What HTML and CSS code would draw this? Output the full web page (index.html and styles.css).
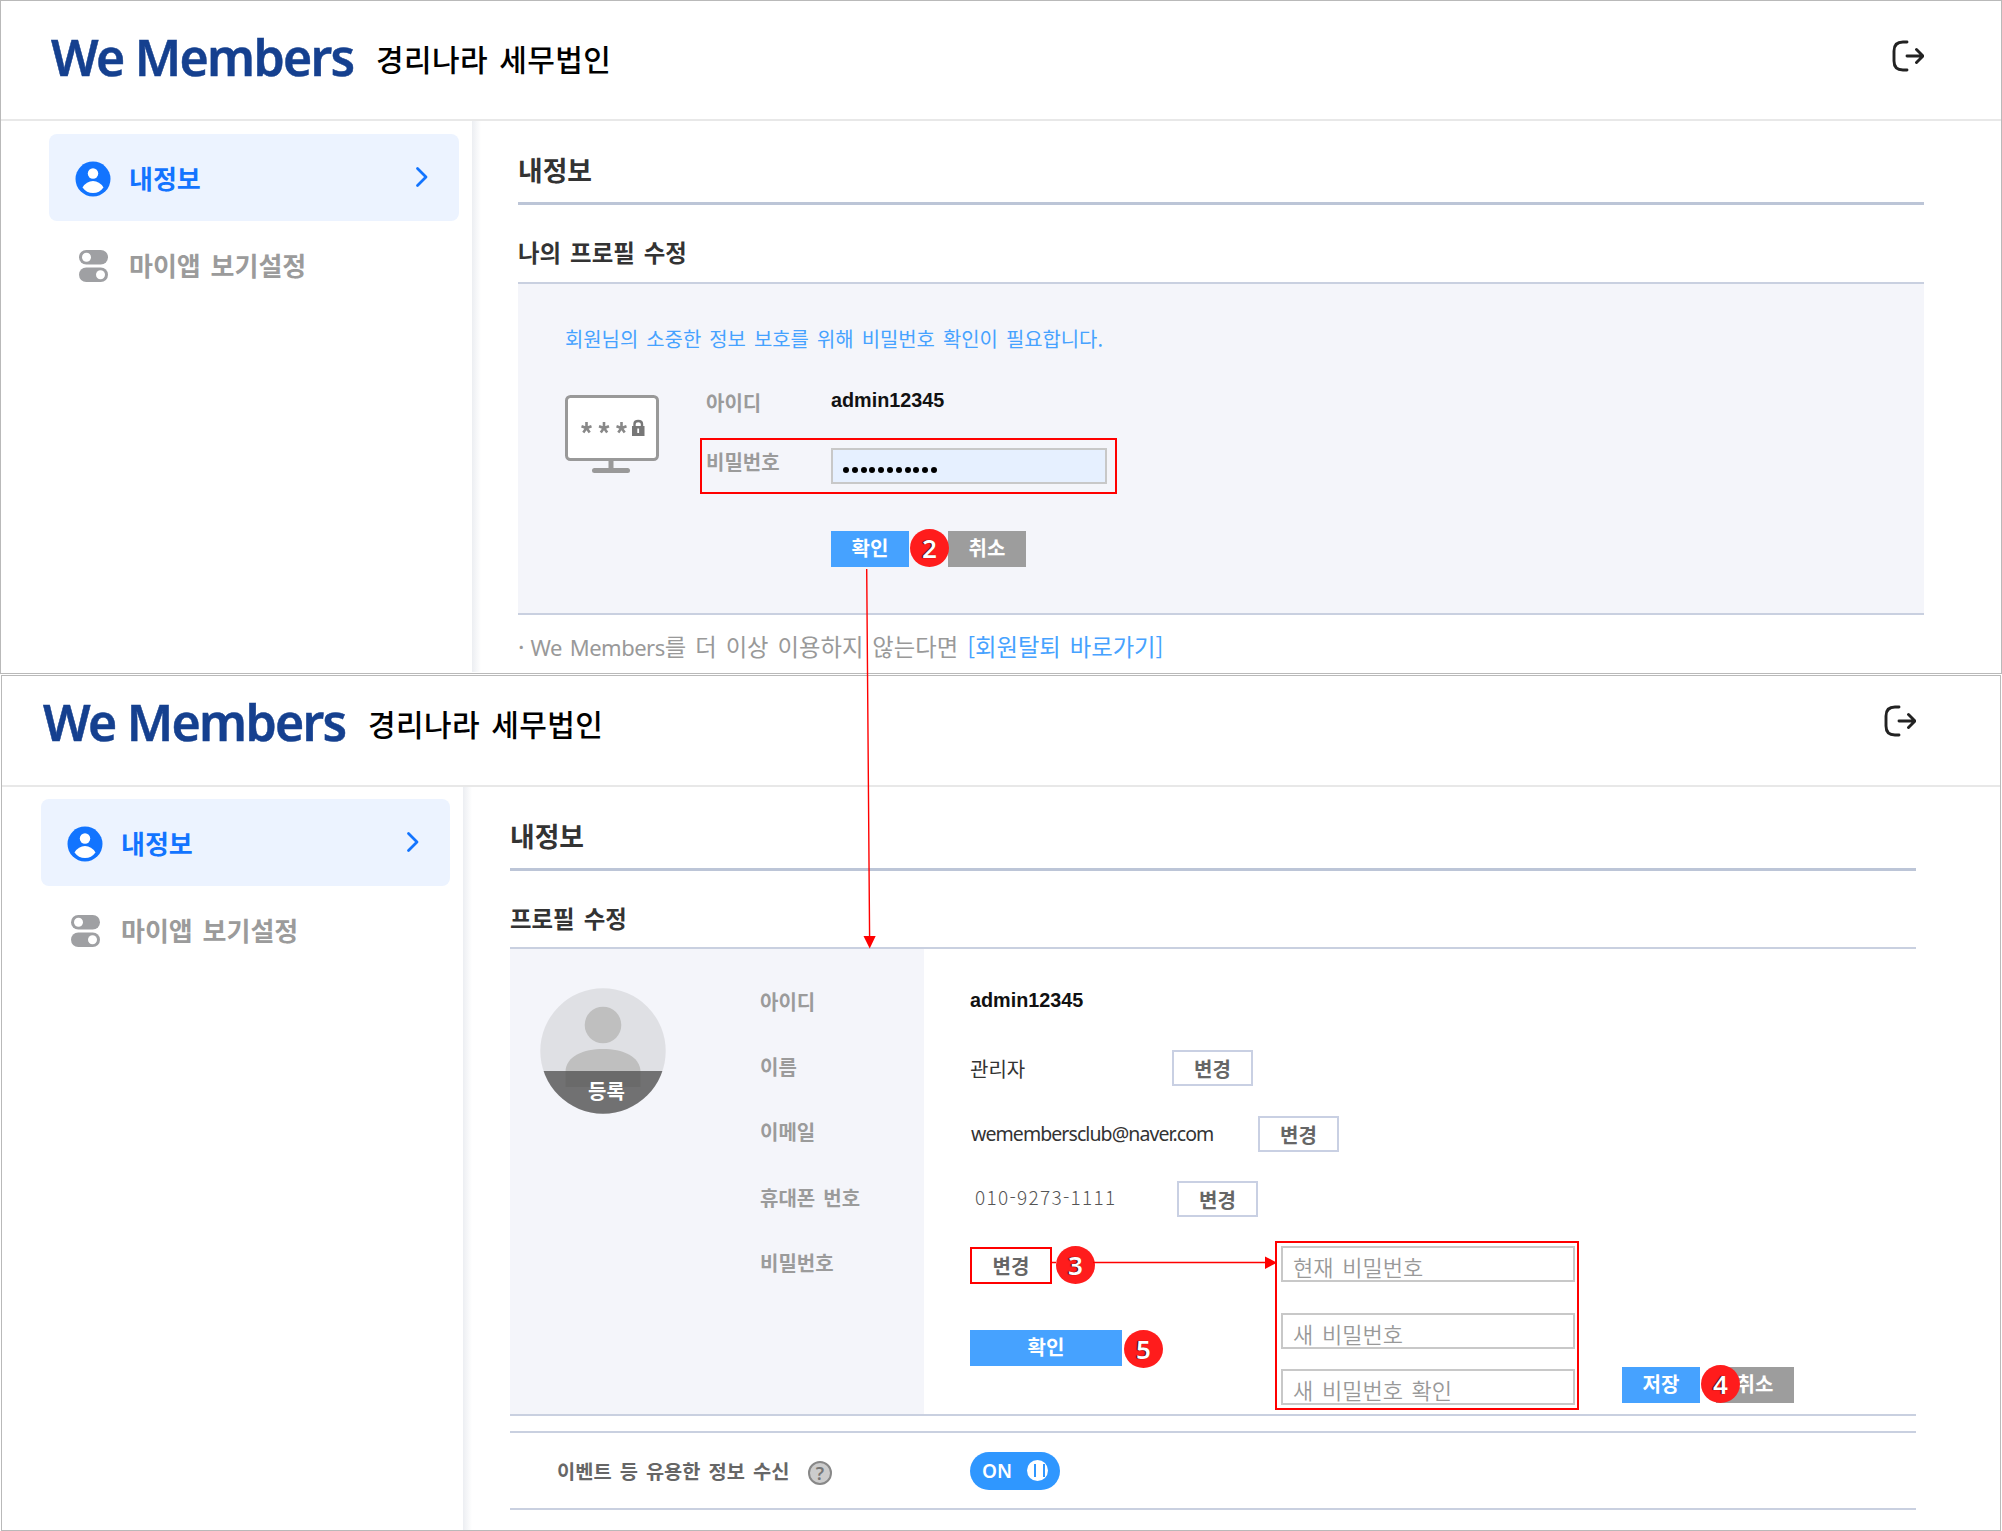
FILE: index.html
```html
<!DOCTYPE html>
<html lang="ko">
<head>
<meta charset="utf-8">
<title>We Members - 내정보</title>
<link rel="stylesheet" href="styles.css">
</head>

<body>
	<svg class="defs" width="0" height="0">
		<symbol id="logout" viewBox="0 0 32 32">
			<path d="M15 2H11Q2 2 2 11V21Q2 30 11 30H15M15 16H30M24.500 9.500L31 16L24.500 22.500" fill="none" stroke="#222" stroke-width="2.900" stroke-linecap="round" stroke-linejoin="round"/>
		</symbol>
		<symbol id="user" viewBox="0 0 36 36">
			<circle cx="18" cy="18" r="17.500" fill="#1274ff"/>
			<circle cx="18" cy="12.500" r="5.200" fill="#fff"/>
			<path d="M7.500 26.500Q11.500 20 18 20T28.500 26.500Q24.500 32 18 32T7.500 26.500Z" fill="#fff"/>
		</symbol>
		<symbol id="toggles" viewBox="0 0 29 32">
			<rect x="0" y="0" width="29" height="14.500" rx="7.250" fill="#9fa0a3"/>
			<rect x="0" y="17.500" width="29" height="14.500" rx="7.250" fill="#9fa0a3"/>
			<circle cx="7.500" cy="7.250" r="4.500" fill="#fff"/>
			<circle cx="21.500" cy="24.750" r="4.500" fill="#fff"/>
		</symbol>
		<symbol id="arrow" viewBox="0 0 14 22">
			<path d="M2.500 2.500L11 11L2.500 19.500" fill="none" stroke="#1274ff" stroke-width="2.800" stroke-linecap="round" stroke-linejoin="round"/>
		</symbol>
	</svg>

	<!-- 비밀번호 확인 -->
	<div class="screen check">
		<div class="header">
			<h1 class="logo">We Members</h1>
			<span class="company">경리나라 세무법인</span>
			<svg class="logout"><use href="#logout"/></svg>
		</div>
		<div class="body">
			<div class="sidebar">
				<a class="menu on"><svg class="icon"><use href="#user"/></svg><span>내정보</span><svg class="chevron"><use href="#arrow"/></svg></a>
				<a class="menu"><svg class="icon toggles"><use href="#toggles"/></svg><span>마이앱 보기설정</span></a>
			</div>
			<div class="main">
				<h2>내정보</h2>
				<h3>나의 프로필 수정</h3>
				<div class="confirmbox">
					<p class="guide">회원님의 소중한 정보 보호를 위해 비밀번호 확인이 필요합니다.</p>
					<div class="form">
						<svg class="monitor" width="94" height="79" viewBox="0 0 94 79">
							<rect x="1.500" y="1.500" width="91" height="63" rx="4" fill="#fff" stroke="#999" stroke-width="3"/>
							<path d="M46 66V74" stroke="#999" stroke-width="5"/>
							<path d="M29.500 75.500H62.500" stroke="#999" stroke-width="5" stroke-linecap="round"/>
							<g stroke="#888" stroke-width="2.600">
								<path id="star" d="M21.500 27V33M16.500 31.200L21.500 33L26.500 31.200M18.300 37.500L21.500 33L24.700 37.500" fill="none"/>
								<use href="#star" x="17.500"/>
								<use href="#star" x="35"/>
							</g>
							<rect x="67" y="31" width="12.500" height="10" fill="#777"/>
							<path d="M69.500 32V29Q69.500 26 73.200 26T77 29V32" fill="none" stroke="#777" stroke-width="2.400"/>
							<path d="M73.200 33.500V38" stroke="#fff" stroke-width="1.800"/>
						</svg>
						<div class="fields">
							<div class="row"><label>아이디</label><b class="userid">admin12345</b></div>
							<div class="row marked"><label>비밀번호</label><div class="password"><i></i><i></i><i></i><i></i><i></i><i></i><i></i><i></i><i></i><i></i><i></i></div></div>
							<div class="buttons">
								<a class="btn blue">확인</a>
								<a class="btn gray">취소</a>
								<span class="badge">2</span>
							</div>
						</div>
					</div>
				</div>
				<p class="leave"><span class="dot">·</span> <span class="brand">We Members</span>를 더 이상 이용하지 않는다면 <a>[회원탈퇴 바로가기]</a></p>
			</div>
		</div>
	</div>

	<!-- 프로필 수정 -->
	<div class="screen edit">
		<div class="header">
			<h1 class="logo">We Members</h1>
			<span class="company">경리나라 세무법인</span>
			<svg class="logout"><use href="#logout"/></svg>
		</div>
		<div class="body">
			<div class="sidebar">
				<a class="menu on"><svg class="icon"><use href="#user"/></svg><span>내정보</span><svg class="chevron"><use href="#arrow"/></svg></a>
				<a class="menu"><svg class="icon toggles"><use href="#toggles"/></svg><span>마이앱 보기설정</span></a>
			</div>
			<div class="main">
				<h2>내정보</h2>
				<h3>프로필 수정</h3>
				<div class="profile">
					<div class="left">
						<div class="avatar">
							<svg width="126" height="126" viewBox="0 0 126 126">
								<clipPath id="round"><circle cx="63" cy="63" r="62.700"/></clipPath>
								<g clip-path="url(#round)">
									<rect width="126" height="126" fill="#dfe0e4"/>
									<circle cx="63" cy="37" r="18.300" fill="#bfbfbf"/>
									<path d="M25.500 99V84C25.500 68 44 61 63 61S100.500 68 100.500 84V99Z" fill="#bfbfbf"/>
									<rect y="83" width="126" height="43" fill="#555" fill-opacity=".8"/>
								</g>
							</svg>
							<span>등록</span>
						</div>
						<ul class="labels">
							<li>아이디</li>
							<li>이름</li>
							<li>이메일</li>
							<li>휴대폰 번호</li>
							<li>비밀번호</li>
						</ul>
					</div>
					<div class="right">
						<div class="value"><b class="userid">admin12345</b></div>
						<div class="value"><span class="name">관리자</span><a class="btn line">변경</a></div>
						<div class="value"><span class="email">wemembersclub@naver.com</span><a class="btn line">변경</a></div>
						<div class="value"><span class="phone">010-9273-1111</span><a class="btn line">변경</a></div>
						<div class="change">
							<div class="actions">
								<a class="btn line red">변경</a>
								<a class="btn blue wide">확인</a>
								<span class="badge three">3</span>
								<span class="badge five">5</span>
							</div>
							<div class="newpassword">
								<div class="input">현재 비밀번호</div>
								<div class="input">새 비밀번호</div>
								<div class="input">새 비밀번호 확인</div>
							</div>
							<div class="save">
								<a class="btn blue">저장</a>
								<a class="btn gray">취소</a>
								<span class="badge">4</span>
							</div>
						</div>
					</div>
				</div>
				<div class="notice">
					<span class="text">이벤트 등 유용한 정보 수신</span>
					<span class="help">?</span>
					<span class="switch">ON<i></i></span>
				</div>
			</div>
		</div>
	</div>

	<svg class="flow" width="2002" height="1531" viewBox="0 0 2002 1531">
		<path d="M866.700 569L869.600 938M1052 1262.500H1056M1093 1262.500H1266" stroke="#f00" stroke-width="1.400"/>
		<path d="M863.500 936H875.700L869.700 948.500ZM1265 1256.500V1269L1277 1262.700Z" fill="#f00"/>
	</svg>
</body>
</html>
```
FILE: styles.css
```css
* {
	box-sizing: border-box;
}

body {
	position: relative;
	width: 2002px;
	height: 1531px;
	margin: 0;
	overflow: hidden;
	background: #fff;
	color: #333;
	font-size: 20px;
	font-family: "Noto Sans CJK KR", sans-serif;
	word-spacing: .126em;
}

h1, h2, h3, p, ul {
	margin: 0;
	padding: 0;
}

li {
	list-style: none;
}

.defs {
	position: absolute;
}

.screen {
	border: 1px solid #b9b9b9;
	background: #fff;
}

.check {
	width: 2002px;
	height: 674px;
}

.edit {
	width: 2000px;
	height: 856px;
	margin: 1px 0 0 1px;
}

/* header */
.header {
	display: flex;
	height: 120px;
	padding: 26px 77px 0 50px;
	border-bottom: 2px solid #e8e8e8;
}

.edit .header {
	height: 111px;
	padding: 16px 84px 0 41px;
}

.logo {
	width: 325px;
	color: #15408f;
	font: 600 50px/60px "Noto Sans", sans-serif;
	letter-spacing: -1.7px;
	word-spacing: 0;
	white-space: nowrap;
	-webkit-text-stroke: .5px #15408f;
}

.company {
	color: #000;
	font-size: 30px;
	font-weight: 500;
	letter-spacing: .4px;
	line-height: 62px;
	white-space: nowrap;
}

.logout {
	width: 32px;
	height: 32px;
	margin: 13px 0 0 auto;
}

/* sidebar */
.body {
	display: flex;
}

.sidebar {
	width: 471px;
	padding: 13px 13px 0 48px;
}

.edit .sidebar {
	width: 461px;
	padding: 12px 13px 0 39px;
}

.menu {
	display: flex;
	align-items: center;
	height: 87px;
	padding: 2px 30px 0 26px;
	border-radius: 8px;
	color: #9b9b9b;
	font-size: 26px;
	font-weight: 700;
}

.menu span {
	margin-top: -2px;
}

.menu.on {
	background: #ecf3ff;
	color: #1274ff;
}

.menu .icon {
	width: 36px;
	height: 36px;
	margin-right: 18px;
}

.menu .toggles {
	width: 29px;
	height: 32px;
	margin: 0 21px 0 4px;
}

.menu .chevron {
	width: 14px;
	height: 22px;
	margin: -3px 0 0 auto;
}

.main {
	flex: 1;
	height: 551px;
	padding: 0 77px 0 46px;
	background: linear-gradient(90deg, #eceef2, #fff) no-repeat left top / 9px 100%;
}

.edit .main {
	height: 743px;
	padding: 0 84px 0 47px;
}

h2 {
	height: 84px;
	padding-top: 30px;
	border-bottom: 3px solid #bcc5d7;
	font-size: 26.8px;
	font-weight: 700;
	line-height: 38px;
}

h3 {
	height: 77px;
	padding-top: 28px;
	font-size: 23.4px;
	font-weight: 700;
	line-height: 38px;
}

.edit h3 {
	height: 76px;
}

/* password check */
.confirmbox {
	height: 333px;
	padding: 39px 0 0 47px;
	border: solid #c9d0e0;
	border-width: 2px 0;
	background: #f4f5fa;
}

.guide {
	color: #46a2ff;
	font-size: 19.9px;
	line-height: 31px;
}

.form {
	display: flex;
	margin-top: 30px;
}

.monitor {
	margin: 11px 41px 0 0;
}

.row {
	display: flex;
	height: 54px;
	padding-left: 6px;
}

.row label {
	width: 125px;
	color: #9b9b9b;
	font-weight: 700;
	line-height: 37px;
}

.userid {
	color: #111;
	font: bold 19.8px/32px "Liberation Sans", sans-serif;
}

.marked {
	width: 417px;
	height: 56px;
	padding: 8px 0 0 4px;
	border: 2px solid #f00;
}

.marked label {
	line-height: 27px;
}

.password {
	display: flex;
	align-items: center;
	gap: 2.8px;
	width: 276px;
	height: 36px;
	padding: 8px 0 0 10px;
	border: 2px solid #c8c8c8;
	background: #e6f0ff;
}

.password i {
	width: 6px;
	height: 6px;
	border-radius: 50%;
	background: #000;
}

.buttons {
	position: relative;
	display: flex;
	gap: 39px;
	margin: 37px 0 0 131px;
}

.btn {
	width: 78px;
	height: 36px;
	color: #fff;
	font-weight: 700;
	line-height: 34px;
	text-align: center;
}

.blue {
	background: #46a2ff;
}

.gray {
	background: #9d9d9d;
}

.line {
	width: 81px;
	border: 2px solid #c9d0e3;
	background: #fff;
	color: #666;
}

.badge {
	position: absolute;
	left: 79px;
	top: -2px;
	width: 39px;
	height: 38px;
	border-radius: 50%;
	background: #ff1c1c;
	color: #fff;
	font: 600 26px/38px "Noto Sans", sans-serif;
	text-align: center;
	text-shadow: -1px 0 1px #300;
}

.leave {
	margin-top: 14px;
	color: #999;
	font-size: 23.3px;
	line-height: 34px;
	white-space: nowrap;
}

.leave .dot {
	margin-right: -3px;
}

.leave .brand {
	font-family: "Noto Sans", sans-serif;
	font-size: 22px;
	letter-spacing: -.5px;
}

.leave a {
	color: #46a2ff;
}

/* profile */
.profile {
	display: flex;
	height: 469px;
	border: solid #c9d0e0;
	border-width: 2px 0;
}

.left {
	display: flex;
	width: 414px;
	padding-left: 30px;
	background: #f4f5fa;
}

.avatar {
	position: relative;
	width: 126px;
	margin: 39px 94px 0 0;
}

.avatar span {
	position: absolute;
	left: 48px;
	top: 88px;
	color: #fff;
	font-weight: 700;
	line-height: 30px;
}

.labels {
	padding-top: 20px;
	color: #9b9b9b;
	font-weight: 700;
	line-height: 65.200px;
}

.right {
	padding: 21px 0 0 46px;
}

.value {
	display: flex;
	align-items: center;
	height: 65.500px;
}

.value .userid {
	margin-top: -5px;
}

.name {
	width: 202px;
}

.email {
	width: 288px;
	padding-left: 1px;
	font-family: "Noto Sans", sans-serif;
	font-size: 19.5px;
	letter-spacing: -.92px;
}

.phone {
	width: 207px;
	margin-top: -5px;
	padding-left: 5px;
	color: #555;
	font-size: 19px;
	font-weight: 300;
	letter-spacing: 1.3px;
}

.change {
	display: flex;
}

.actions {
	position: relative;
	display: flex;
	flex-direction: column;
	gap: 46px;
	width: 305px;
	padding-top: 15px;
}

.red {
	width: 82px;
	height: 37px;
	border-color: #f00;
}

.wide {
	width: 152px;
}

.three {
	left: 86px;
	top: 14px;
}

.five {
	left: 154px;
	top: 98px;
}

.newpassword {
	width: 304px;
	height: 169px;
	margin-top: 9px;
	padding: 3px 2px 0 4px;
	border: 2px solid #f00;
}

.input {
	height: 36px;
	margin-bottom: 20px;
	padding-left: 10px;
	border: 2px solid #c8c8c8;
	color: #999;
	font-size: 22px;
	font-weight: 350;
	line-height: 36px;
}

.input:first-child {
	margin-bottom: 31px;
}

.save {
	position: relative;
	display: flex;
	gap: 16px;
	height: 36px;
	margin: 135px 0 0 43px;
}

.notice {
	display: flex;
	align-items: center;
	height: 79px;
	margin-top: 15px;
	padding-left: 47px;
	border: solid #c9d0e0;
	border-width: 2px 0;
}

.notice .text {
	width: 251px;
	color: #666;
	font-size: 19.8px;
	font-weight: 700;
}

.help {
	width: 24px;
	height: 24px;
	margin: 4px 138px 0 0;
	border: 2px solid #888;
	border-radius: 50%;
	background: #ccc;
	color: #777;
	font: 600 18px/20px "Noto Sans", sans-serif;
	text-align: center;
}

.switch {
	display: flex;
	align-items: center;
	justify-content: space-between;
	width: 90px;
	height: 38px;
	padding: 0 12px;
	border-radius: 19px;
	background: #2f97ff;
	color: #fff;
	font: 600 19px/36px "Noto Sans", sans-serif;
}

.switch i {
	width: 21px;
	height: 21px;
	padding: 4px 7px;
	border-radius: 50%;
	background: #fff;
}

.switch i::before {
	content: "";
	display: block;
	width: 7px;
	height: 13px;
	border: solid #2f97ff;
	border-width: 0 2px;
}

.flow {
	position: absolute;
	left: 0;
	top: 0;
}
```
